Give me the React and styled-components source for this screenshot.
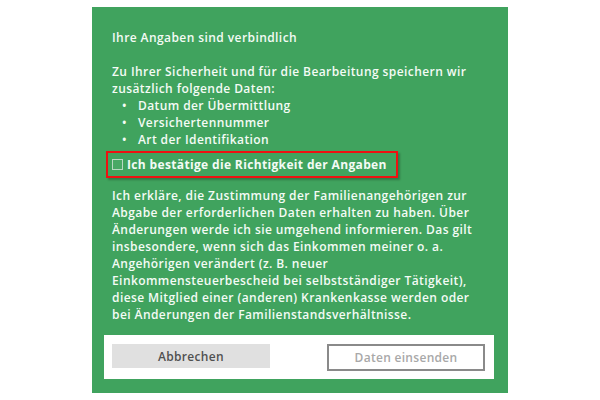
import React from "react";
import styled, { createGlobalStyle } from "styled-components";

const Global = createGlobalStyle`
  html, body { margin: 0; padding: 0; background: #fff; }
  body { font-family: "Open Sans", "Liberation Sans", sans-serif; }
`;

const Page = styled.div`
  width: 600px;
  height: 400px;
  padding: 7px 0 0 92px;
  box-sizing: border-box;
`;

const Panel = styled.div`
  width: 416px;
  height: 386px;
  background: #40a35e;
  box-sizing: border-box;
  padding: 22px 14px 14px 12px;
  display: flex;
  flex-direction: column;
  color: #f4fbf5;
  font-size: 12px;
  line-height: 17px;
  font-weight: 600;
  letter-spacing: 0.42px;
`;

const Text = styled.div`
  padding-left: 8px;
`;

const Para = styled.p`
  margin: 0 0 ${(p) => p.$mb || 0}px 0;
`;

const List = styled.ul`
  margin: 0;
  padding: 0 0 0 10px;
  list-style: none;
`;

const Item = styled.li`
  display: flex;
  gap: 11px;
  &::before {
    content: "•";
  }
`;

const ConfirmBox = styled.div`
  display: flex;
  align-items: center;
  gap: 4px;
  width: 292px;
  height: 27px;
  box-sizing: border-box;
  margin: 3px 0 9px -6px;
  padding-left: 4px;
  border: 2px solid #ee1111;
  box-shadow: 2px 2px 2px rgba(0, 0, 0, 0.25);
  font-weight: 700;
  letter-spacing: 0.35px;
`;

const Check = styled.span`
  width: 9px;
  height: 9px;
  border: 1px solid #b9d8c2;
  background: #49a865;
  flex: none;
`;

const ButtonBar = styled.div`
  margin-top: auto;
  height: 44px;
  background: #fff;
  box-sizing: border-box;
  padding: 9px 9px 8px 8px;
  display: flex;
  justify-content: space-between;
  align-items: flex-start;
`;

const Button = styled.button`
  width: 158px;
  height: ${(p) => (p.$outline ? 27 : 24)}px;
  box-sizing: border-box;
  font-family: "Open Sans", "Liberation Sans", sans-serif;
  font-size: 12px;
  font-weight: 600;
  letter-spacing: 0.3px;
  border: ${(p) => (p.$outline ? "2px solid #8a8a8a" : "none")};
  background: ${(p) => (p.$outline ? "#fff" : "#e0e0e0")};
  color: ${(p) => (p.$outline ? "#a8a8a8" : "#505050")};
  padding: 0;
`;

export default function App() {
  return (
    <>
      <Global />
      <Page>
        <Panel>
          <Text>
            <Para $mb={17}>Ihre Angaben sind verbindlich</Para>
            <Para>
              Zu Ihrer Sicherheit und für die Bearbeitung speichern wir
              <br />
              zusätzlich folgende Daten:
            </Para>
            <List>
              <Item>Datum der Übermittlung</Item>
              <Item>Versichertennummer</Item>
              <Item>Art der Identifikation</Item>
            </List>
            <ConfirmBox>
              <Check />
              Ich bestätige die Richtigkeit der Angaben
            </ConfirmBox>
            <Para>
              Ich erkläre, die Zustimmung der Familienangehörigen zur
              <br />
              Abgabe der erforderlichen Daten erhalten zu haben. Über
              <br />
              Änderungen werde ich sie umgehend informieren. Das gilt
              <br />
              insbesondere, wenn sich das Einkommen meiner o. a.
              <br />
              Angehörigen verändert (z. B. neuer
              <br />
              Einkommensteuerbescheid bei selbstständiger Tätigkeit),
              <br />
              diese Mitglied einer (anderen) Krankenkasse werden oder
              <br />
              bei Änderungen der Familienstandsverhältnisse.
            </Para>
          </Text>
          <ButtonBar>
            <Button>Abbrechen</Button>
            <Button $outline>Daten einsenden</Button>
          </ButtonBar>
        </Panel>
      </Page>
    </>
  );
}
